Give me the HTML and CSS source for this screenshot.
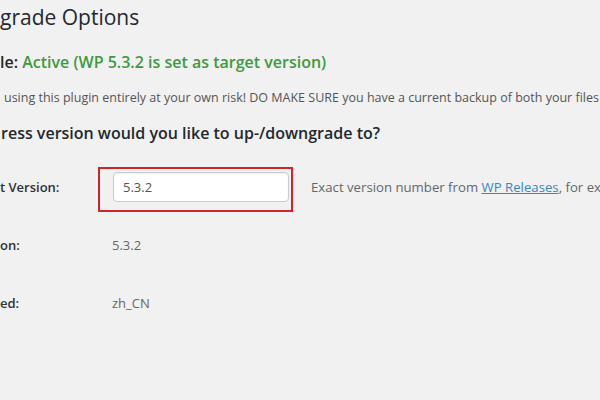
FILE: index.html
```html
<!DOCTYPE html>
<html lang="en">
<head>
<meta charset="utf-8">
<title>WP Downgrade Options</title>
<link rel="stylesheet" href="styles.css">
</head>
<body>
<div class="wrap">
  <h1 class="title">grade Options</h1>
  <p class="status"><span class="status-label">le:</span> <span class="status-active">Active (WP 5.3.2 is set as target version)</span></p>
  <p class="warning">using this plugin entirely at your own risk! DO MAKE SURE you have a current backup of both your files</p>
  <h2 class="question">ress version would you like to up-/downgrade to?</h2>
  <div class="form-table">
    <div class="label">t Version:</div>
    <div class="field">
      <span class="input-wrap">
        <input class="text-input" type="text" value="5.3.2">
        <span class="highlight"></span>
      </span>
      <span class="description">Exact version number from <a href="#">WP Releases</a>, for ex</span>
    </div>
    <div class="label">on:</div>
    <div class="field value">5.3.2</div>
    <div class="label">ed:</div>
    <div class="field value">zh_CN</div>
  </div>
</div>
</body>
</html>
```
FILE: styles.css
```css
html, body {
  margin: 0;
  padding: 0;
  background: #f1f1f1;
  overflow: hidden;
  width: 600px;
  height: 400px;
}
body {
  font-family: "Open Sans", "Noto Sans", sans-serif;
  color: #444;
}
.wrap {
  padding-top: 2px;
  white-space: nowrap;
}
.title {
  margin: 0;
  font-size: 21px;
  font-weight: 400;
  line-height: 30px;
  color: #23282d;
}
.status {
  margin: 18px 0 0 0;
  font-size: 16px;
  font-weight: 600;
  line-height: 24px;
  color: #23282d;
}
.status-active {
  color: #3e9a3e;
}
.warning {
  margin: 14px 0 0 4px;
  font-size: 12.5px;
  line-height: 20px;
  color: #555;
}
.question {
  margin: 13px 0 0 1px;
  font-size: 16px;
  font-weight: 600;
  line-height: 24px;
  color: #23282d;
}
.form-table {
  margin-top: 13px;
  display: grid;
  grid-template-columns: 98px 1fr;
  grid-auto-rows: 58px;
  align-items: center;
}
.label {
  font-size: 13px;
  font-weight: 600;
  color: #2c3338;
}
.field {
  display: flex;
  align-items: center;
  font-size: 13px;
  color: #666;
}
.value {
  padding-left: 14px;
}
.input-wrap {
  position: relative;
  padding-left: 15px;
}
.text-input {
  box-sizing: border-box;
  width: 176px;
  height: 30px;
  margin: 0;
  padding: 0 9px;
  border: 1px solid #ccc;
  border-radius: 4px;
  background: #fff;
  box-shadow: inset 0 1px 2px rgba(0,0,0,0.07);
  font-family: "Open Sans", "Noto Sans", sans-serif;
  font-size: 13px;
  color: #555;
  display: block;
}
.highlight {
  position: absolute;
  left: 0;
  top: -5px;
  width: 195px;
  height: 45px;
  box-sizing: border-box;
  border: 2px solid #d0242b;
  pointer-events: none;
}
.description {
  margin-left: 22px;
  font-size: 13.2px;
  color: #666;
}
.description a {
  color: #3a87b8;
  text-decoration: underline;
}
```
